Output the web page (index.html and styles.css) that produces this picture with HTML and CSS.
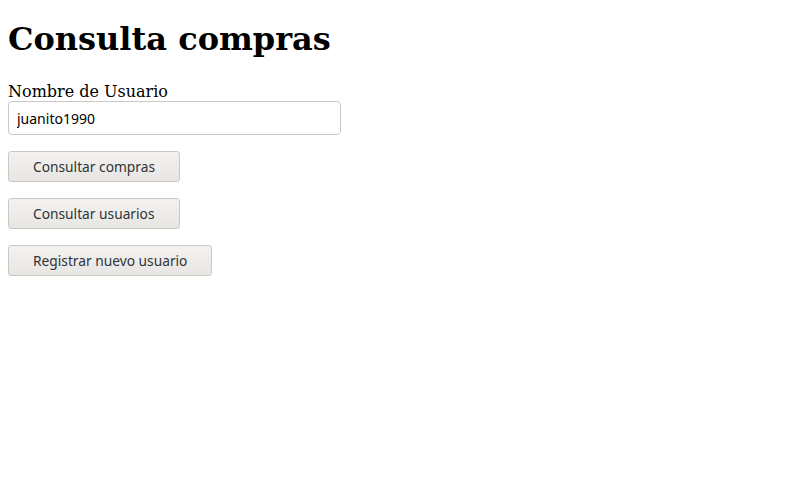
FILE: index.html
```html
<!DOCTYPE html>
<html lang="es">
<head>
<meta charset="utf-8">
<title>Consulta compras</title>
<link rel="stylesheet" href="styles.css">
</head>
<body class="page">
<h1 class="title">Consulta compras</h1>
<form class="form">
  <label class="label" for="usuario">Nombre de Usuario</label>
  <input class="field" id="usuario" type="text" value="juanito1990">
  <button class="btn" type="button">Consultar compras</button>
  <button class="btn" type="button">Consultar usuarios</button>
  <button class="btn" type="button">Registrar nuevo usuario</button>
</form>
</body>
</html>
```
FILE: styles.css
```css
.page {
  margin: 8px;
  font-family: "DejaVu Serif", serif;
  font-size: 16px;
  color: #000;
  background: #fff;
}
.title {
  font-size: 32px;
  font-weight: bold;
  margin: 13px 0 24px;
  line-height: 37px;
}
.form {
  display: flex;
  flex-direction: column;
  align-items: flex-start;
}
.label {
  line-height: 19px;
}
.field {
  box-sizing: border-box;
  width: 333px;
  height: 34px;
  margin: 0 0 16px;
  padding: 0 8px;
  border: 1px solid #cdc7c2;
  border-radius: 4px;
  font-family: "Noto Sans", sans-serif;
  font-size: 14px;
  color: #000;
  background: #fff;
}
.btn {
  box-sizing: border-box;
  height: 31px;
  margin: 0 0 16px;
  padding: 0 24px;
  border: 1px solid #cdc7c2;
  border-radius: 3px;
  background: linear-gradient(#f4f2f1, #e8e6e3);
  font-family: "Noto Sans", sans-serif;
  font-size: 13.75px;
  color: #2e3436;
}
```
